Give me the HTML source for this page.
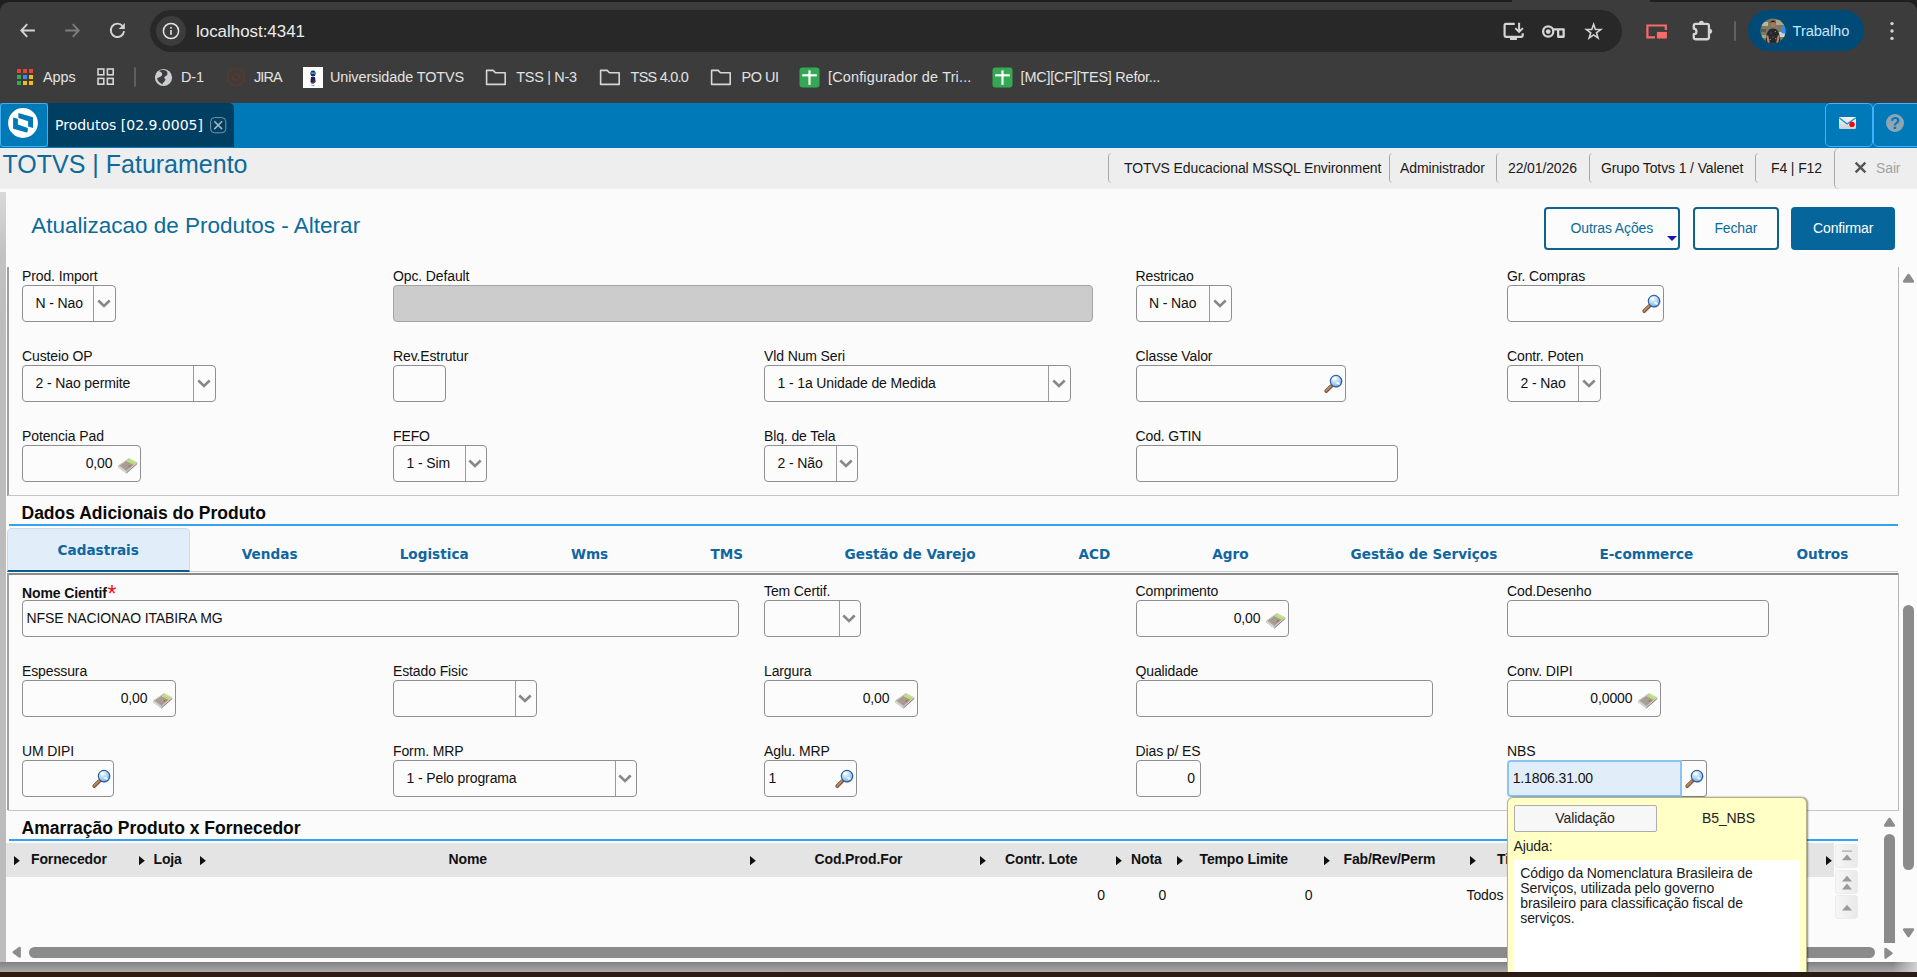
<!DOCTYPE html><html lang="pt-BR"><head><meta charset="utf-8"><title>Produtos</title><style>
*{box-sizing:border-box;margin:0;padding:0}
html,body{width:1917px;height:977px;overflow:hidden;background:#fbfbfb}
body{position:relative;font-family:"Liberation Sans",Arial,sans-serif;font-size:14px;color:#111}
.a{position:absolute}
.t{position:absolute;white-space:nowrap;line-height:1}
/* chrome */
#chrome{left:0;top:0;width:1917px;height:103px;background:#3c3c3c}
#strip{left:0;top:0;width:1917px;height:2px;background:#1f1f1f}
#omni{left:150px;top:10px;width:1472px;height:42px;border-radius:21px;background:#282828}
.bm{color:#e3e3e3;font-size:14.45px;top:70px;letter-spacing:-0.1px}
/* app */
#bar{left:0;top:103px;width:1917px;height:44.5px;background:#0079b8}
#band{left:0;top:147.5px;width:1917px;height:41px;background:#eeeeee}
.hd{font-size:14px;letter-spacing:-0.12px;color:#1a1a1a;top:161.3px}
.sep{width:5px;height:30px;top:153px;border-left:1px solid #a9a9a9;border-radius:4px 0 0 4px}
/* fields */
.lb{position:absolute;white-space:nowrap;font-size:14px;letter-spacing:-0.12px;line-height:16px;color:#111}
.bx{position:absolute;height:37px;border:1px solid #8f8f8f;border-radius:4px;background:#fcfcfc;font-size:14px;letter-spacing:-0.12px;line-height:34.8px;white-space:nowrap;overflow:hidden;color:#111}
.bx.dis{background:#cccccc;border-color:#a4a4a4}
.bx .dv{position:absolute;right:20.4px;top:0;width:1px;height:35px;background:#9a9a9a}
.bx svg.ch{position:absolute;right:3.9px;top:13.4px}
.bx svg.mg{position:absolute;right:1.6px;top:7.6px}
.bx svg.cl{position:absolute;right:2.4px;top:11.6px}
.sel{padding-left:12.5px}
.txt{padding-left:3.6px}
.num{text-align:right}
.tab{position:absolute;top:547.6px;font-family:"DejaVu Sans",Verdana,sans-serif;font-weight:bold;font-size:13.62px;line-height:1;color:#0f66a0;white-space:nowrap}
.sec{position:absolute;font-weight:bold;font-size:17.5px;line-height:1;color:#0a0a0a;white-space:nowrap}
.gh{position:absolute;top:851.8px;font-weight:bold;font-size:14px;letter-spacing:-0.13px;line-height:1;color:#111;white-space:nowrap}
.tri{position:absolute;top:856.4px;width:0;height:0;border-left:5.9px solid #111;border-top:4.65px solid transparent;border-bottom:4.65px solid transparent}
.gc{position:absolute;top:887.8px;font-size:14px;letter-spacing:-0.12px;line-height:1;white-space:nowrap}
.gb{position:absolute;left:1834.5px;width:23px;height:24px;border-radius:3px;background:linear-gradient(90deg,#f6f6f6,#e9e9e9);border:1px solid #ececec}
</style></head><body>
<div id="chrome" class="a"></div>
<div id="strip" class="a"></div>
<div class="a" style="left:1512px;top:0;width:138px;height:3px;background:#3c3c3c;border-radius:0"></div>
<div class="a" style="left:0;top:2px;width:10px;height:10px;background:#1f1f1f"></div><div class="a" style="left:0;top:2px;width:20px;height:20px;background:#3c3c3c;border-top-left-radius:9px"></div>
<div class="a" style="left:1907px;top:2px;width:10px;height:10px;background:#1f1f1f"></div><div class="a" style="left:1897px;top:2px;width:20px;height:20px;background:#3c3c3c;border-top-right-radius:9px"></div>
<div id="omni" class="a"></div>
<svg class="a" style="left:18px;top:21px" width="20" height="20" viewBox="0 0 20 20"><path d="M16.85 9.5H4M9.2 3.1 3.3 9.5 9.2 15.9" fill="none" stroke="#d4d4d4" stroke-width="1.9" stroke-linecap="butt" stroke-linejoin="miter"/></svg>
<svg class="a" style="left:62px;top:21px" width="20" height="20" viewBox="0 0 20 20"><path d="M3.15 9.5H16M10.8 3.1 16.7 9.5 10.8 15.9" fill="none" stroke="#7c7c7c" stroke-width="1.9"/></svg>
<svg class="a" style="left:107px;top:20px" width="22" height="22" viewBox="0 0 22 22"><path d="M15.6 6A6.7 6.7 0 1 0 17.13 11.2" fill="none" stroke="#d4d4d4" stroke-width="1.9"/><path d="M17.8 3V9.1H11.7Z" fill="#d4d4d4"/></svg>
<div class="a" style="left:156px;top:16px;width:30px;height:30px;border-radius:15px;background:#3c3c3c"></div>
<svg class="a" style="left:161px;top:21px" width="20" height="20" viewBox="0 0 20 20"><circle cx="10" cy="10" r="7.6" fill="none" stroke="#e3e3e3" stroke-width="1.5"/><rect x="9.2" y="9" width="1.6" height="4.8" fill="#e3e3e3"/><rect x="9.2" y="6" width="1.6" height="1.7" fill="#e3e3e3"/></svg>
<div class="t" style="left:196px;top:24px;font-size:16.9px;color:#ececec;letter-spacing:0px">localhost:4341</div>
<svg class="a" style="left:1502px;top:20px" width="24" height="22" viewBox="0 0 24 22"><path d="M12.7 3.9H3.8Q2.6 3.9 2.6 5.1V15.6Q2.6 16.8 3.8 16.8H19.5Q20.7 16.8 20.7 15.6V13.2" fill="none" stroke="#d4d4d4" stroke-width="2.2"/><rect x="8" y="17.8" width="6.9" height="2.2" fill="#d4d4d4"/><path d="M17.1 2.8V11M13.3 8.1 17.1 11.9 20.9 8.1" fill="none" stroke="#d4d4d4" stroke-width="2"/></svg>
<svg class="a" style="left:1541px;top:22px" width="26" height="18" viewBox="0 0 26 18"><circle cx="7.2" cy="9.5" r="5.1" fill="none" stroke="#d4d4d4" stroke-width="2.3"/><circle cx="7.2" cy="9.55" r="2.4" fill="#d4d4d4"/><path d="M12.1 7.35H22.65V14.75H17.15V8.2" fill="none" stroke="#d4d4d4" stroke-width="2.3" stroke-linejoin="round"/></svg>
<svg class="a" style="left:1583px;top:20px" width="22" height="22" viewBox="0 0 22 22"><path d="M10.60 4.35 12.38 9.46 17.78 9.57 13.47 12.83 15.04 18.01 10.60 14.92 6.16 18.01 7.73 12.83 3.42 9.57 8.82 9.46Z" fill="none" stroke="#d4d4d4" stroke-width="1.6" stroke-linejoin="miter" stroke-miterlimit="6"/></svg>
<svg class="a" style="left:1644px;top:22px" width="24" height="18" viewBox="0 0 24 18"><path d="M21.8 8V3.5H3.4V15.4H11" fill="none" stroke="#f96a6a" stroke-width="2.2"/><rect x="12.9" y="9.9" width="10" height="6.6" fill="#f96a6a"/></svg>
<svg class="a" style="left:1690px;top:19px" width="24" height="24" viewBox="0 0 24 24"><path d="M5.75 4.95H16.95Q18.95 4.95 18.95 6.95V18.25Q18.95 20.25 16.95 20.25H5.75Q3.75 20.25 3.75 18.25V15.1A2.7 2.7 0 0 0 3.75 9.7V6.95Q3.75 4.95 5.75 4.95Z" fill="none" stroke="#d4d4d4" stroke-width="2.3" stroke-linejoin="round"/><path d="M8.9 4.3A2.5 2.5 0 0 1 13.9 4.3Z" fill="#d4d4d4"/><path d="M19.6 9.8A2.5 2.5 0 0 1 19.6 14.8Z" fill="#d4d4d4"/></svg>
<div class="a" style="left:1734px;top:21px;width:2px;height:20px;background:#606060;border-radius:1px"></div>
<div class="a" style="left:1747.5px;top:9.7px;width:116.4px;height:41.8px;border-radius:21px;background:#004a77"></div>
<svg class="a" style="left:1759.5px;top:17.5px" width="26" height="26" viewBox="0 0 26 26"><defs><clipPath id="av"><circle cx="13" cy="13" r="12.5"/></clipPath></defs><g clip-path="url(#av)"><rect width="26" height="26" fill="#7d785f"/><rect x="0" y="4" width="8" height="4" fill="#b9b6a2"/><rect x="16" y="2" width="9" height="5" fill="#a9a792"/><rect x="1" y="11" width="5" height="3" fill="#5c5a48"/><rect x="18" y="14" width="7" height="5" fill="#d4d4cc"/><rect x="2" y="17" width="4" height="3" fill="#9ea58e"/><rect x="21.5" y="8" width="5" height="7.5" rx="1.5" fill="#2b8fe6"/><path d="M5.6 26C5.8 15 8 10.6 13 10.6S20.2 15 20.4 26Z" fill="#25282c"/><path d="M7.2 17.5 8.8 25M18.8 17.5 17.2 25" stroke="#b5866a" stroke-width="2.1"/><ellipse cx="13" cy="6" rx="2.5" ry="3.2" fill="#a9775c"/><path d="M10.4 5C10.6 1.6 15.4 1.6 15.6 5 14.4 3.8 11.6 3.8 10.4 5Z" fill="#1c1917"/><circle cx="11" cy="15" r=".6" fill="#c76a6a"/><circle cx="15.4" cy="13.6" r=".6" fill="#8fa86a"/><circle cx="13" cy="19" r=".6" fill="#c76a6a"/><circle cx="15.8" cy="20.6" r=".6" fill="#b9a25a"/><circle cx="10.2" cy="21.4" r=".6" fill="#8fa86a"/></g></svg>
<div class="t" style="left:1792.6px;top:23.6px;font-size:14.7px;color:#c2e7ff;letter-spacing:-0.1px">Trabalho</div>
<svg class="a" style="left:1888px;top:20px" width="8" height="22" viewBox="0 0 8 22"><circle cx="4" cy="3.6" r="1.7" fill="#d6d6d6"/><circle cx="4" cy="11" r="1.7" fill="#d6d6d6"/><circle cx="4" cy="18.4" r="1.7" fill="#d6d6d6"/></svg>
<svg class="a" style="left:17px;top:68.5px" width="16" height="16" viewBox="0 0 16 16"><rect x="0" y="0" width="4" height="4" fill="#ea4335"/><rect x="6" y="0" width="4" height="4" fill="#ea4335"/><rect x="12" y="0" width="4" height="4" fill="#ea4335"/><rect x="0" y="6" width="4" height="4" fill="#34a853"/><rect x="6" y="6" width="4" height="4" fill="#4285f4"/><rect x="12" y="6" width="4" height="4" fill="#fbbc04"/><rect x="0" y="12" width="4" height="4" fill="#34a853"/><rect x="6" y="12" width="4" height="4" fill="#fbbc04"/><rect x="12" y="12" width="4" height="4" fill="#fbbc04"/></svg>
<div class="t bm" style="left:43px">Apps</div>
<svg class="a" style="left:96px;top:67px" width="20" height="20" viewBox="0 0 20 20"><g fill="none" stroke="#d6d6d6" stroke-width="1.6"><rect x="2" y="2" width="5.8" height="5.8"/><rect x="11.4" y="2" width="5.8" height="5.8"/><rect x="2" y="11.4" width="5.8" height="5.8"/><rect x="11.4" y="11.4" width="5.8" height="5.8"/></g></svg>
<div class="a" style="left:134px;top:67px;width:2px;height:20px;background:#5f5f5f;border-radius:1px"></div>
<svg class="a" style="left:154px;top:67.5px" width="19" height="19" viewBox="0 0 19 19"><circle cx="9.5" cy="9.5" r="8.6" fill="#c9cdd2"/><path d="M5 3.2C8 4 9 6 7.6 7.8 6 9.4 4.4 9 3 10.6 4 14 7 15.6 8.4 16.6 8.8 14 11 13.4 11.6 11.4 10 10.2 9.6 9 11.4 8.2 13.6 7.6 14 5.6 13 3.6 10 1.6 7 1.8 5 3.2Z" fill="#3c3c3c"/></svg>
<div class="t bm" style="left:181px">D-1</div>
<svg class="a" style="left:226px;top:67px" width="20" height="20" viewBox="0 0 20 20"><circle cx="10" cy="10" r="8.4" fill="none" stroke="#553a2c" stroke-width="2"/><path d="M8.2 5.6 14.4 7.4 14.4 12 12.2 11.4 12.2 9 8.2 7.8ZM5.6 8 7.8 8.6 7.8 11 11.8 12.2 11.8 14.4 5.6 12.6Z" fill="#553a2c"/></svg>
<div class="t bm" style="left:254px;letter-spacing:-0.85px">JIRA</div>
<svg class="a" style="left:303px;top:66.5px" width="20" height="21" viewBox="0 0 20 21"><rect width="20" height="21" fill="#fff"/><ellipse cx="10" cy="6.4" rx="2.6" ry="3" fill="#1d2a6b"/><rect x="8.2" y="5.4" width="3.6" height="1.5" fill="#35b4e8"/><path d="M8 10H12L12.6 15 10 17 7.4 15Z" fill="#26215a"/><path d="M8 16.2 12.4 14.4" stroke="#7a4a2a" stroke-width="1"/><rect x="8.4" y="18.2" width="3.2" height="0.9" fill="#3aa0e0"/></svg>
<div class="t bm" style="left:330px">Universidade TOTVS</div>
<svg class="a" style="left:485px;top:67px" width="22" height="20" viewBox="0 0 22 20"><path d="M1.6 3.4H8.2L10.4 5.8H20.2V17.4H1.6Z" fill="none" stroke="#d6d6d6" stroke-width="1.6" stroke-linejoin="round"/></svg>
<div class="t bm" style="left:516.3px;letter-spacing:-0.3px">TSS | N-3</div>
<svg class="a" style="left:599px;top:67px" width="22" height="20" viewBox="0 0 22 20"><path d="M1.6 3.4H8.2L10.4 5.8H20.2V17.4H1.6Z" fill="none" stroke="#d6d6d6" stroke-width="1.6" stroke-linejoin="round"/></svg>
<div class="t bm" style="left:630.6px;letter-spacing:-0.75px">TSS 4.0.0</div>
<svg class="a" style="left:710px;top:67px" width="22" height="20" viewBox="0 0 22 20"><path d="M1.6 3.4H8.2L10.4 5.8H20.2V17.4H1.6Z" fill="none" stroke="#d6d6d6" stroke-width="1.6" stroke-linejoin="round"/></svg>
<div class="t bm" style="left:741.5px;letter-spacing:-0.45px">PO UI</div>
<svg class="a" style="left:799px;top:66.5px" width="21" height="21" viewBox="0 0 21 21"><rect x="0.5" y="0.5" width="20" height="20" rx="3" fill="#34a853"/><rect x="9.4" y="3.4" width="2.2" height="14.4" fill="#fff"/><rect x="3.2" y="7.2" width="14.6" height="2.2" fill="#fff"/></svg>
<div class="t bm" style="left:828px;letter-spacing:0.17px">[Configurador de Tri...</div>
<svg class="a" style="left:992px;top:66.5px" width="21" height="21" viewBox="0 0 21 21"><rect x="0.5" y="0.5" width="20" height="20" rx="3" fill="#34a853"/><rect x="9.4" y="3.4" width="2.2" height="14.4" fill="#fff"/><rect x="3.2" y="7.2" width="14.6" height="2.2" fill="#fff"/></svg>
<div class="t bm" style="left:1020.6px;letter-spacing:-0.22px">[MC][CF][TES] Refor...</div>
<div id="bar" class="a"></div>
<div class="a" style="left:0;top:103px;width:48px;height:44px;border:1px solid #45aeea;border-radius:3px;background:#0079b8"></div>
<svg class="a" style="left:0;top:100px" width="48" height="48" viewBox="0 0 48 48"><circle cx="23" cy="23" r="14.9" fill="#fff"/><path d="M18.4 13.1 33 17.2 33 27.9 28.1 26.5 28.1 21.3 18.4 17.9Z" fill="#0079b8"/><path d="M13.1 17.5 17.9 18.8 17.9 24.6 27.8 27.9 27.8 31.2 26.6 32.4 13.1 28.7Z" fill="#0079b8"/></svg>
<div class="a" style="left:48px;top:103px;width:186px;height:44px;background:#003e62;border-radius:0 5px 0 0"></div>
<div class="t" style="left:55px;top:117.5px;font-family:'DejaVu Sans',Verdana,sans-serif;font-size:14px;color:#fff">Produtos [02.9.0005]</div>
<svg class="a" style="left:210px;top:116.6px" width="17" height="17" viewBox="0 0 17 17"><rect x="0.6" y="0.6" width="15.2" height="15.2" rx="4" fill="none" stroke="#7f95a6" stroke-width="1"/><path d="M4.3 4.3 12.1 12.1M12.1 4.3 4.3 12.1" stroke="#a9b6c0" stroke-width="1.5"/></svg>
<div class="a" style="left:1825px;top:103px;width:48px;height:44px;border:1px solid #45aeff;border-radius:5px"></div>
<div class="a" style="left:1873px;top:103px;width:52px;height:44px;border:1px solid #45aeff;border-radius:5px"></div>
<svg class="a" style="left:1838px;top:116px" width="19" height="14" viewBox="0 0 19 14"><defs><linearGradient id="mg1" x1="0" y1="0" x2="0" y2="1"><stop offset="0" stop-color="#f2f5f7"/><stop offset="1" stop-color="#c6d3da"/></linearGradient></defs><rect x="1" y="1" width="17" height="12" rx="1.2" fill="url(#mg1)"/><path d="M1.4 2 9.2 8 17.6 2" fill="none" stroke="#1f84c4" stroke-width="1.2"/><circle cx="14" cy="8.4" r="2.7" fill="#ff0000"/></svg>
<div class="a" style="left:1886px;top:114px;width:18px;height:18px;border-radius:9px;background:#8fa5b5"></div>
<div class="t" style="left:1889.9px;top:114.7px;font-weight:bold;font-size:16.5px;color:#0079b8">?</div>
<div id="band" class="a"></div>
<div class="t" style="left:2.5px;top:152.2px;font-size:25px;color:#0c6b9b">TOTVS | Faturamento</div>
<div class="a sep" style="left:1108px"></div>
<div class="a sep" style="left:1389px"></div>
<div class="a sep" style="left:1496px"></div>
<div class="a sep" style="left:1589px"></div>
<div class="a sep" style="left:1755px"></div>
<div class="a" style="left:1834px;top:148px;width:6px;height:41px;border-left:1px solid #a9a9a9;border-radius:5px 0 0 5px"></div>
<div class="t hd" style="left:1124px">TOTVS Educacional MSSQL Environment</div>
<div class="t hd" style="left:1400px">Administrador</div>
<div class="t hd" style="left:1508px">22/01/2026</div>
<div class="t hd" style="left:1601px">Grupo Totvs 1 / Valenet</div>
<div class="t hd" style="left:1771px">F4 | F12</div>
<svg class="a" style="left:1853.5px;top:161px" width="13" height="13" viewBox="0 0 13 13"><path d="M1.6 1.6 11.4 11.4M11.4 1.6 1.6 11.4" stroke="#575757" stroke-width="2.4"/></svg>
<div class="t hd" style="left:1876px;color:#a2a2a2">Sair</div>
<div class="a" style="left:0;top:192px;width:5.8px;height:770px;background:linear-gradient(180deg,#dadada 0,#c2c2c2 8%,#bcbcbc 20%,#bcbcbc 100%)"></div>
<div class="t" style="left:31.2px;top:214.9px;font-size:22.5px;color:#0c6b9b">Atualizacao de Produtos - Alterar</div>
<div class="a" style="left:1544px;top:207px;width:136px;height:43px;border:2px solid #0c6390;border-radius:4px;background:#fcfcfc"></div>
<div class="t" style="left:1570.6px;top:221px;font-size:14px;letter-spacing:-0.13px;color:#0c6b9b">Outras Ações</div>
<div class="a" style="left:1667px;top:236px;width:0;height:0;border-top:5px solid #1a1aa8;border-left:5px solid transparent;border-right:5px solid transparent"></div>
<div class="a" style="left:1692.5px;top:207px;width:86.5px;height:43px;border:2px solid #0c6390;border-radius:4px;background:#fcfcfc"></div>
<div class="t" style="left:1714.4px;top:221px;font-size:14px;letter-spacing:-0.13px;color:#0c6b9b">Fechar</div>
<div class="a" style="left:1790.5px;top:207px;width:104.5px;height:43px;border-radius:4px;background:#06659a"></div>
<div class="t" style="left:1813px;top:221px;font-size:14px;letter-spacing:-0.13px;color:#fff">Confirmar</div>
<div class="a" style="left:7px;top:267px;width:2px;height:229px;background:#a0a0a0"></div>
<div class="a" style="left:1898px;top:267px;width:1px;height:229px;background:#b5b5b5"></div>
<div class="a" style="left:8px;top:495px;width:1890.5px;height:1px;background:#c6c6c6"></div>
<svg width="0" height="0" style="position:absolute"><defs><radialGradient id="lens" cx=".4" cy=".3" r=".8"><stop offset="0" stop-color="#f0f9ff"/><stop offset=".5" stop-color="#add6f5"/><stop offset="1" stop-color="#6ca4da"/></radialGradient></defs></svg>
<div class="lb" style="left:22px;top:268.4px">Prod. Import</div>
<div class="bx sel" style="left:22px;top:285px;width:94px">N - Nao<i class="dv" style="right:20.9px"></i><svg class="ch" width="14" height="9" viewBox="0 0 14 9"><path d="M1.3 1.5 7 7 12.7 1.5" fill="none" stroke="#888888" stroke-width="2.6" stroke-linejoin="miter"/></svg></div>
<div class="lb" style="left:393px;top:268.4px">Opc. Default</div>
<div class="bx dis" style="left:393px;top:285px;width:699.5px"></div>
<div class="lb" style="left:1135.5px;top:268.4px">Restricao</div>
<div class="bx sel" style="left:1135.5px;top:285px;width:96px">N - Nao<i class="dv" style="right:20.2px"></i><svg class="ch" width="14" height="9" viewBox="0 0 14 9"><path d="M1.3 1.5 7 7 12.7 1.5" fill="none" stroke="#888888" stroke-width="2.6" stroke-linejoin="miter"/></svg></div>
<div class="lb" style="left:1507px;top:268.4px">Gr. Compras</div>
<div class="bx txt" style="left:1507px;top:285px;width:157px"><svg class="mg" width="20" height="20" viewBox="0 0 20 20"><path d="M8.8 12 3.4 17.4" stroke="#000" stroke-opacity=".18" stroke-width="3.8" stroke-linecap="round"/><path d="M8.6 11.8 3.2 17.1" stroke="#6a422c" stroke-width="3.5" stroke-linecap="round"/><path d="M8.6 11.8 3.2 17.1" stroke="#ad7654" stroke-width="2.1" stroke-linecap="round"/><path d="M7.9 11.7 3 16.5" stroke="#d6aa88" stroke-width=".8" stroke-linecap="round"/><circle cx="13.4" cy="7.6" r="6.2" fill="#1d3f6e" opacity=".3"/><circle cx="13" cy="7.1" r="5.7" fill="url(#lens)" stroke="#33619a" stroke-width="1.2"/><ellipse cx="11.2" cy="4.7" rx="2.1" ry="1.4" fill="#fff" opacity=".95"/><ellipse cx="15" cy="9.3" rx="1.9" ry="1.2" fill="#fff" opacity=".85" transform="rotate(35 15 9.3)"/></svg></div>
<div class="lb" style="left:22px;top:348.4px">Custeio OP</div>
<div class="bx sel" style="left:22px;top:365px;width:194px">2 - Nao permite<i class="dv" style="right:20.9px"></i><svg class="ch" width="14" height="9" viewBox="0 0 14 9"><path d="M1.3 1.5 7 7 12.7 1.5" fill="none" stroke="#888888" stroke-width="2.6" stroke-linejoin="miter"/></svg></div>
<div class="lb" style="left:393px;top:348.4px">Rev.Estrutur</div>
<div class="bx txt" style="left:393px;top:365px;width:52.5px"></div>
<div class="lb" style="left:764px;top:348.4px">Vld Num Seri</div>
<div class="bx sel" style="left:764px;top:365px;width:307px">1 - 1a Unidade de Medida<i class="dv" style="right:21.2px"></i><svg class="ch" width="14" height="9" viewBox="0 0 14 9"><path d="M1.3 1.5 7 7 12.7 1.5" fill="none" stroke="#888888" stroke-width="2.6" stroke-linejoin="miter"/></svg></div>
<div class="lb" style="left:1135.5px;top:348.4px">Classe Valor</div>
<div class="bx txt" style="left:1135.5px;top:365px;width:210.5px"><svg class="mg" width="20" height="20" viewBox="0 0 20 20"><path d="M8.8 12 3.4 17.4" stroke="#000" stroke-opacity=".18" stroke-width="3.8" stroke-linecap="round"/><path d="M8.6 11.8 3.2 17.1" stroke="#6a422c" stroke-width="3.5" stroke-linecap="round"/><path d="M8.6 11.8 3.2 17.1" stroke="#ad7654" stroke-width="2.1" stroke-linecap="round"/><path d="M7.9 11.7 3 16.5" stroke="#d6aa88" stroke-width=".8" stroke-linecap="round"/><circle cx="13.4" cy="7.6" r="6.2" fill="#1d3f6e" opacity=".3"/><circle cx="13" cy="7.1" r="5.7" fill="url(#lens)" stroke="#33619a" stroke-width="1.2"/><ellipse cx="11.2" cy="4.7" rx="2.1" ry="1.4" fill="#fff" opacity=".95"/><ellipse cx="15" cy="9.3" rx="1.9" ry="1.2" fill="#fff" opacity=".85" transform="rotate(35 15 9.3)"/></svg></div>
<div class="lb" style="left:1507px;top:348.4px">Contr. Poten</div>
<div class="bx sel" style="left:1507px;top:365px;width:93.5px">2 - Nao<i class="dv" style="right:20.5px"></i><svg class="ch" width="14" height="9" viewBox="0 0 14 9"><path d="M1.3 1.5 7 7 12.7 1.5" fill="none" stroke="#888888" stroke-width="2.6" stroke-linejoin="miter"/></svg></div>
<div class="lb" style="left:22px;top:428.4px">Potencia Pad</div>
<div class="bx num" style="left:22px;top:445px;width:119px;padding-right:27.6px">0,00<svg class="cl" width="20" height="16" viewBox="0 0 20 16"><path d="M0.2 7.7 8.5 13.8 19.2 4.5 19.2 6.1 8.5 15.5 0.2 9.3Z" fill="#857e73"/><path d="M0.2 7.7 8.5 13.8 8.5 15.5 0.2 9.3Z" fill="#dcdcda"/><path d="M10.9 0.3 19.2 4.5 8.5 13.8 0.2 7.7Z" fill="#b1a99d" stroke="#dedbd5" stroke-width=".8" stroke-linejoin="round"/><path d="M3 7.7 8.9 3.7 14.7 6.6 8.5 11.8Z" fill="#a0988c"/><path d="M4.6 8.9 10.6 4.6M6.4 10.2 12.5 5.6" stroke="#bdb6ab" stroke-width=".6"/><path d="M11.3 1.3 17.8 4.1 16 6.3 9.1 3.1Z" fill="#a2dc4c" stroke="#dff2bd" stroke-width=".55"/><path d="M11.5 1.9 16.9 4.2 16.2 5 10.6 2.7Z" fill="#c2ec7e"/><circle cx="11.5" cy="7.8" r=".85" fill="#e2472d"/></svg></div>
<div class="lb" style="left:393px;top:428.4px">FEFO</div>
<div class="bx sel" style="left:393px;top:445px;width:93.5px">1 - Sim<i class="dv" style="right:19.8px"></i><svg class="ch" width="14" height="9" viewBox="0 0 14 9"><path d="M1.3 1.5 7 7 12.7 1.5" fill="none" stroke="#888888" stroke-width="2.6" stroke-linejoin="miter"/></svg></div>
<div class="lb" style="left:764px;top:428.4px">Blq. de Tela</div>
<div class="bx sel" style="left:764px;top:445px;width:94px">2 - Não<i class="dv" style="right:19.8px"></i><svg class="ch" width="14" height="9" viewBox="0 0 14 9"><path d="M1.3 1.5 7 7 12.7 1.5" fill="none" stroke="#888888" stroke-width="2.6" stroke-linejoin="miter"/></svg></div>
<div class="lb" style="left:1135.5px;top:428.4px">Cod. GTIN</div>
<div class="bx txt" style="left:1135.5px;top:445px;width:262.5px"></div>
<div class="sec" style="left:21.5px;top:505px">Dados Adicionais do Produto</div>
<div class="a" style="left:9px;top:524px;width:1889px;height:2px;background:#35a1f0"></div>
<div class="a" style="left:189px;top:571px;width:1709px;height:1px;background:#cfcfcf"></div>
<div class="a" style="left:7px;top:573px;width:1891px;height:2px;background:#8a8a8a"></div>
<div class="a" style="left:7px;top:573px;width:2px;height:237px;background:#a0a0a0"></div>
<div class="a" style="left:1898px;top:573px;width:1px;height:237px;background:#b5b5b5"></div>
<div class="a" style="left:7px;top:528px;width:183px;height:44px;background:#e1edf9;border:1px solid #ccd9e6;border-bottom:2.5px solid #0b5b8c;border-radius:5px 5px 0 0"></div>
<div class="tab" style="left:57.5px;top:543.5px">Cadastrais</div>
<div class="tab" style="left:241.8px">Vendas</div>
<div class="tab" style="left:399.7px">Logistica</div>
<div class="tab" style="left:570.9px">Wms</div>
<div class="tab" style="left:710.5px">TMS</div>
<div class="tab" style="left:844.6px">Gestão de Varejo</div>
<div class="tab" style="left:1078.4px">ACD</div>
<div class="tab" style="left:1212.3px">Agro</div>
<div class="tab" style="left:1350.5px">Gestão de Serviços</div>
<div class="tab" style="left:1599.4px">E-commerce</div>
<div class="tab" style="left:1796.4px">Outros</div>
<div class="lb" style="left:22px;top:584.9px;font-weight:bold">Nome Cientif<span style="color:#ee1111;font-weight:normal;font-size:23px;line-height:10px;position:relative;top:4px;left:0.5px">*</span></div>
<div class="bx txt" style="left:22px;top:600px;width:716.5px">NFSE NACIONAO ITABIRA MG</div>
<div class="lb" style="left:764px;top:583.4px">Tem Certif.</div>
<div class="bx sel" style="left:764px;top:600px;width:97px"><i class="dv" style="right:20.5px"></i><svg class="ch" width="14" height="9" viewBox="0 0 14 9"><path d="M1.3 1.5 7 7 12.7 1.5" fill="none" stroke="#888888" stroke-width="2.6" stroke-linejoin="miter"/></svg></div>
<div class="lb" style="left:1135.5px;top:583.4px">Comprimento</div>
<div class="bx num" style="left:1135.5px;top:600px;width:153.5px;padding-right:27.6px">0,00<svg class="cl" width="20" height="16" viewBox="0 0 20 16"><path d="M0.2 7.7 8.5 13.8 19.2 4.5 19.2 6.1 8.5 15.5 0.2 9.3Z" fill="#857e73"/><path d="M0.2 7.7 8.5 13.8 8.5 15.5 0.2 9.3Z" fill="#dcdcda"/><path d="M10.9 0.3 19.2 4.5 8.5 13.8 0.2 7.7Z" fill="#b1a99d" stroke="#dedbd5" stroke-width=".8" stroke-linejoin="round"/><path d="M3 7.7 8.9 3.7 14.7 6.6 8.5 11.8Z" fill="#a0988c"/><path d="M4.6 8.9 10.6 4.6M6.4 10.2 12.5 5.6" stroke="#bdb6ab" stroke-width=".6"/><path d="M11.3 1.3 17.8 4.1 16 6.3 9.1 3.1Z" fill="#a2dc4c" stroke="#dff2bd" stroke-width=".55"/><path d="M11.5 1.9 16.9 4.2 16.2 5 10.6 2.7Z" fill="#c2ec7e"/><circle cx="11.5" cy="7.8" r=".85" fill="#e2472d"/></svg></div>
<div class="lb" style="left:1507px;top:583.4px">Cod.Desenho</div>
<div class="bx txt" style="left:1507px;top:600px;width:261.5px"></div>
<div class="lb" style="left:22px;top:663.4px">Espessura</div>
<div class="bx num" style="left:22px;top:680px;width:154px;padding-right:27.6px">0,00<svg class="cl" width="20" height="16" viewBox="0 0 20 16"><path d="M0.2 7.7 8.5 13.8 19.2 4.5 19.2 6.1 8.5 15.5 0.2 9.3Z" fill="#857e73"/><path d="M0.2 7.7 8.5 13.8 8.5 15.5 0.2 9.3Z" fill="#dcdcda"/><path d="M10.9 0.3 19.2 4.5 8.5 13.8 0.2 7.7Z" fill="#b1a99d" stroke="#dedbd5" stroke-width=".8" stroke-linejoin="round"/><path d="M3 7.7 8.9 3.7 14.7 6.6 8.5 11.8Z" fill="#a0988c"/><path d="M4.6 8.9 10.6 4.6M6.4 10.2 12.5 5.6" stroke="#bdb6ab" stroke-width=".6"/><path d="M11.3 1.3 17.8 4.1 16 6.3 9.1 3.1Z" fill="#a2dc4c" stroke="#dff2bd" stroke-width=".55"/><path d="M11.5 1.9 16.9 4.2 16.2 5 10.6 2.7Z" fill="#c2ec7e"/><circle cx="11.5" cy="7.8" r=".85" fill="#e2472d"/></svg></div>
<div class="lb" style="left:393px;top:663.4px">Estado Fisic</div>
<div class="bx sel" style="left:393px;top:680px;width:144px"><i class="dv" style="right:19.8px"></i><svg class="ch" width="14" height="9" viewBox="0 0 14 9"><path d="M1.3 1.5 7 7 12.7 1.5" fill="none" stroke="#888888" stroke-width="2.6" stroke-linejoin="miter"/></svg></div>
<div class="lb" style="left:764px;top:663.4px">Largura</div>
<div class="bx num" style="left:764px;top:680px;width:154px;padding-right:27.6px">0,00<svg class="cl" width="20" height="16" viewBox="0 0 20 16"><path d="M0.2 7.7 8.5 13.8 19.2 4.5 19.2 6.1 8.5 15.5 0.2 9.3Z" fill="#857e73"/><path d="M0.2 7.7 8.5 13.8 8.5 15.5 0.2 9.3Z" fill="#dcdcda"/><path d="M10.9 0.3 19.2 4.5 8.5 13.8 0.2 7.7Z" fill="#b1a99d" stroke="#dedbd5" stroke-width=".8" stroke-linejoin="round"/><path d="M3 7.7 8.9 3.7 14.7 6.6 8.5 11.8Z" fill="#a0988c"/><path d="M4.6 8.9 10.6 4.6M6.4 10.2 12.5 5.6" stroke="#bdb6ab" stroke-width=".6"/><path d="M11.3 1.3 17.8 4.1 16 6.3 9.1 3.1Z" fill="#a2dc4c" stroke="#dff2bd" stroke-width=".55"/><path d="M11.5 1.9 16.9 4.2 16.2 5 10.6 2.7Z" fill="#c2ec7e"/><circle cx="11.5" cy="7.8" r=".85" fill="#e2472d"/></svg></div>
<div class="lb" style="left:1135.5px;top:663.4px">Qualidade</div>
<div class="bx txt" style="left:1135.5px;top:680px;width:297px"></div>
<div class="lb" style="left:1507px;top:663.4px">Conv. DIPI</div>
<div class="bx num" style="left:1507px;top:680px;width:154px;padding-right:27.6px">0,0000<svg class="cl" width="20" height="16" viewBox="0 0 20 16"><path d="M0.2 7.7 8.5 13.8 19.2 4.5 19.2 6.1 8.5 15.5 0.2 9.3Z" fill="#857e73"/><path d="M0.2 7.7 8.5 13.8 8.5 15.5 0.2 9.3Z" fill="#dcdcda"/><path d="M10.9 0.3 19.2 4.5 8.5 13.8 0.2 7.7Z" fill="#b1a99d" stroke="#dedbd5" stroke-width=".8" stroke-linejoin="round"/><path d="M3 7.7 8.9 3.7 14.7 6.6 8.5 11.8Z" fill="#a0988c"/><path d="M4.6 8.9 10.6 4.6M6.4 10.2 12.5 5.6" stroke="#bdb6ab" stroke-width=".6"/><path d="M11.3 1.3 17.8 4.1 16 6.3 9.1 3.1Z" fill="#a2dc4c" stroke="#dff2bd" stroke-width=".55"/><path d="M11.5 1.9 16.9 4.2 16.2 5 10.6 2.7Z" fill="#c2ec7e"/><circle cx="11.5" cy="7.8" r=".85" fill="#e2472d"/></svg></div>
<div class="lb" style="left:22px;top:743.4px">UM DIPI</div>
<div class="bx txt" style="left:22px;top:760px;width:92px"><svg class="mg" width="20" height="20" viewBox="0 0 20 20"><path d="M8.8 12 3.4 17.4" stroke="#000" stroke-opacity=".18" stroke-width="3.8" stroke-linecap="round"/><path d="M8.6 11.8 3.2 17.1" stroke="#6a422c" stroke-width="3.5" stroke-linecap="round"/><path d="M8.6 11.8 3.2 17.1" stroke="#ad7654" stroke-width="2.1" stroke-linecap="round"/><path d="M7.9 11.7 3 16.5" stroke="#d6aa88" stroke-width=".8" stroke-linecap="round"/><circle cx="13.4" cy="7.6" r="6.2" fill="#1d3f6e" opacity=".3"/><circle cx="13" cy="7.1" r="5.7" fill="url(#lens)" stroke="#33619a" stroke-width="1.2"/><ellipse cx="11.2" cy="4.7" rx="2.1" ry="1.4" fill="#fff" opacity=".95"/><ellipse cx="15" cy="9.3" rx="1.9" ry="1.2" fill="#fff" opacity=".85" transform="rotate(35 15 9.3)"/></svg></div>
<div class="lb" style="left:393px;top:743.4px">Form. MRP</div>
<div class="bx sel" style="left:393px;top:760px;width:243.5px">1 - Pelo programa<i class="dv" style="right:19.8px"></i><svg class="ch" width="14" height="9" viewBox="0 0 14 9"><path d="M1.3 1.5 7 7 12.7 1.5" fill="none" stroke="#888888" stroke-width="2.6" stroke-linejoin="miter"/></svg></div>
<div class="lb" style="left:764px;top:743.4px">Aglu. MRP</div>
<div class="bx txt" style="left:764px;top:760px;width:93px">1<svg class="mg" width="20" height="20" viewBox="0 0 20 20"><path d="M8.8 12 3.4 17.4" stroke="#000" stroke-opacity=".18" stroke-width="3.8" stroke-linecap="round"/><path d="M8.6 11.8 3.2 17.1" stroke="#6a422c" stroke-width="3.5" stroke-linecap="round"/><path d="M8.6 11.8 3.2 17.1" stroke="#ad7654" stroke-width="2.1" stroke-linecap="round"/><path d="M7.9 11.7 3 16.5" stroke="#d6aa88" stroke-width=".8" stroke-linecap="round"/><circle cx="13.4" cy="7.6" r="6.2" fill="#1d3f6e" opacity=".3"/><circle cx="13" cy="7.1" r="5.7" fill="url(#lens)" stroke="#33619a" stroke-width="1.2"/><ellipse cx="11.2" cy="4.7" rx="2.1" ry="1.4" fill="#fff" opacity=".95"/><ellipse cx="15" cy="9.3" rx="1.9" ry="1.2" fill="#fff" opacity=".85" transform="rotate(35 15 9.3)"/></svg></div>
<div class="lb" style="left:1135.5px;top:743.4px">Dias p/ ES</div>
<div class="bx num" style="left:1135.5px;top:760px;width:65px;padding-right:4.6px">0</div>
<div class="lb" style="left:1507px;top:743.4px">NBS</div>
<div class="a" style="left:1681px;top:760px;width:25.5px;height:37px;border:1px solid #8f8f8f;border-left:none;border-radius:0 4px 4px 0;background:#fcfcfc"></div>
<div class="a" style="left:1683.6px;top:768.6px;width:20px;height:20px"><svg width="20" height="20" viewBox="0 0 20 20"><path d="M8.8 12 3.4 17.4" stroke="#000" stroke-opacity=".18" stroke-width="3.8" stroke-linecap="round"/><path d="M8.6 11.8 3.2 17.1" stroke="#6a422c" stroke-width="3.5" stroke-linecap="round"/><path d="M8.6 11.8 3.2 17.1" stroke="#ad7654" stroke-width="2.1" stroke-linecap="round"/><path d="M7.9 11.7 3 16.5" stroke="#d6aa88" stroke-width=".8" stroke-linecap="round"/><circle cx="13.4" cy="7.6" r="6.2" fill="#1d3f6e" opacity=".3"/><circle cx="13" cy="7.1" r="5.7" fill="url(#lens)" stroke="#33619a" stroke-width="1.2"/><ellipse cx="11.2" cy="4.7" rx="2.1" ry="1.4" fill="#fff" opacity=".95"/><ellipse cx="15" cy="9.3" rx="1.9" ry="1.2" fill="#fff" opacity=".85" transform="rotate(35 15 9.3)"/></svg></div>
<div class="bx txt" style="left:1507px;top:760px;width:175px;background:#e1edf9;border:2px solid #8cc4f2;border-radius:4px 0 0 4px;line-height:33px;padding-left:3.7px">1.1806.31.00</div>
<div class="a" style="left:8px;top:809.5px;width:1890.5px;height:1px;background:#c6c6c6"></div>
<div class="sec" style="left:21.5px;top:820px">Amarração Produto x Fornecedor</div>
<div class="a" style="left:9px;top:839.2px;width:1849px;height:1.8px;background:#35a1f0"></div>
<div class="a" style="left:6px;top:842.7px;width:1828px;height:34.1px;background:#e4e4e4"></div>
<svg class="a" style="left:13.5px;top:856.4px" width="6" height="9.4" viewBox="0 0 6 9.4"><path d="M0 0 5.9 4.65 0 9.3Z" fill="#111"/></svg>
<svg class="a" style="left:139px;top:856.4px" width="6" height="9.4" viewBox="0 0 6 9.4"><path d="M0 0 5.9 4.65 0 9.3Z" fill="#111"/></svg>
<svg class="a" style="left:199.5px;top:856.4px" width="6" height="9.4" viewBox="0 0 6 9.4"><path d="M0 0 5.9 4.65 0 9.3Z" fill="#111"/></svg>
<svg class="a" style="left:749.5px;top:856.4px" width="6" height="9.4" viewBox="0 0 6 9.4"><path d="M0 0 5.9 4.65 0 9.3Z" fill="#111"/></svg>
<svg class="a" style="left:980px;top:856.4px" width="6" height="9.4" viewBox="0 0 6 9.4"><path d="M0 0 5.9 4.65 0 9.3Z" fill="#111"/></svg>
<svg class="a" style="left:1115.5px;top:856.4px" width="6" height="9.4" viewBox="0 0 6 9.4"><path d="M0 0 5.9 4.65 0 9.3Z" fill="#111"/></svg>
<svg class="a" style="left:1177px;top:856.4px" width="6" height="9.4" viewBox="0 0 6 9.4"><path d="M0 0 5.9 4.65 0 9.3Z" fill="#111"/></svg>
<svg class="a" style="left:1323.5px;top:856.4px" width="6" height="9.4" viewBox="0 0 6 9.4"><path d="M0 0 5.9 4.65 0 9.3Z" fill="#111"/></svg>
<svg class="a" style="left:1469.5px;top:856.4px" width="6" height="9.4" viewBox="0 0 6 9.4"><path d="M0 0 5.9 4.65 0 9.3Z" fill="#111"/></svg>
<svg class="a" style="left:1825.5px;top:856.4px" width="6" height="9.4" viewBox="0 0 6 9.4"><path d="M0 0 5.9 4.65 0 9.3Z" fill="#111"/></svg>
<div class="gh" style="left:31px">Fornecedor</div>
<div class="gh" style="left:153.5px">Loja</div>
<div class="gh" style="left:448.5px">Nome</div>
<div class="gh" style="left:814.5px">Cod.Prod.For</div>
<div class="gh" style="left:1005px">Contr. Lote</div>
<div class="gh" style="left:1131px">Nota</div>
<div class="gh" style="left:1199.5px">Tempo Limite</div>
<div class="gh" style="left:1343.5px">Fab/Rev/Perm</div>
<div class="gh" style="left:1497px">Ti</div>
<div class="gc" style="left:1097.2px">0</div>
<div class="gc" style="left:1158.4px">0</div>
<div class="gc" style="left:1304.8px">0</div>
<div class="gc" style="left:1466.5px">Todos</div>
<div class="gb" style="top:843.5px"><svg width="21" height="22" viewBox="0 0 21 22" style="display:block"><rect x="6" y="5.6" width="10" height="1" fill="#9a9a9a"/><path d="M6 15.2l5-5.8 5 5.8z" fill="#9a9a9a"/></svg></div>
<div class="gb" style="top:869.5px"><svg width="21" height="22" viewBox="0 0 21 22" style="display:block"><path d="M6 10.6l5-5.8 5 5.8zM6 18.4l5-5.8 5 5.8z" fill="#9a9a9a"/></svg></div>
<div class="gb" style="top:894.5px"><svg width="21" height="22" viewBox="0 0 21 22" style="display:block"><path d="M6 14.6l5-5.8 5 5.8z" fill="#9a9a9a"/></svg></div>
<div class="a" style="left:1902.5px;top:605px;width:11px;height:265px;border-radius:5.5px;background:#8b8b8b"></div>
<svg class="a" style="left:1902.2px;top:272.9px" width="13" height="10" viewBox="0 0 12.7 10"><polygon points="2 8.4 10.7 8.4 6.35 2" fill="#8c8c8c" stroke="#8c8c8c" stroke-width="2.6" stroke-linejoin="round"/></svg>
<svg class="a" style="left:1902.1px;top:928.2px" width="13" height="10" viewBox="0 0 12.7 10"><polygon points="2 1.6 10.7 1.6 6.35 8" fill="#8c8c8c" stroke="#8c8c8c" stroke-width="2.6" stroke-linejoin="round"/></svg>
<svg class="a" style="left:1883.4px;top:817px" width="13" height="10" viewBox="0 0 12.7 10"><polygon points="2 8.4 10.7 8.4 6.35 2" fill="#8c8c8c" stroke="#8c8c8c" stroke-width="2.6" stroke-linejoin="round"/></svg>
<div class="a" style="left:1884px;top:833.5px;width:11px;height:109.3px;border-radius:5.5px 5.5px 0 0;background:#8b8b8b"></div>
<div class="a" style="left:29px;top:947px;width:1846px;height:10.5px;border-radius:5.5px;background:#8b8b8b"></div>
<svg class="a" style="left:11.8px;top:946.4px" width="9.4" height="12.4" viewBox="0 0 9.4 12.4"><polygon points="7.6 2 7.6 10.4 1.8 6.2" fill="#8c8c8c" stroke="#8c8c8c" stroke-width="2.6" stroke-linejoin="round"/></svg>
<svg class="a" style="left:1884px;top:946.6px" width="9.4" height="12.4" viewBox="0 0 9.4 12.4"><polygon points="1.6 2 1.6 10.4 7.4 6.2" fill="#8c8c8c" stroke="#8c8c8c" stroke-width="2.6" stroke-linejoin="round"/></svg>
<div class="a" style="left:0;top:962px;width:1917px;height:10px;background:linear-gradient(180deg,#808080,#aaaaaa)"></div>
<div class="a" style="left:1893px;top:962px;width:24px;height:10px;background:linear-gradient(90deg,rgba(214,214,214,0),rgba(214,214,214,.95))"></div>
<div class="a" style="left:0;top:971.7px;width:1917px;height:6px;background:linear-gradient(90deg,#311c11,#2a1c16)"></div>
<div class="a" style="left:1507px;top:797px;width:300px;height:174.6px;background:#ffffc6;border:1px solid #b4b48c;border-bottom:none;border-radius:6px 6px 0 0;box-shadow:1px 0 2px rgba(0,0,0,.45)"></div>
<div class="a" style="left:1513.5px;top:805px;width:143px;height:26.5px;background:#f7f7f7;border:1px solid #adadad;border-radius:2px;text-align:center;line-height:24.5px;font-size:14px;letter-spacing:-0.12px;color:#222">Validação</div>
<div class="t" style="left:1702px;top:811.3px;font-size:14px;letter-spacing:-0.12px;color:#222">B5_NBS</div>
<div class="t" style="left:1513.5px;top:838.5px;font-size:14px;letter-spacing:-0.12px;color:#222">Ajuda:</div>
<div class="a" style="left:1513.5px;top:859.5px;width:286px;height:112px;background:#fff;padding:6.3px 0 0 6.8px;font-size:14px;letter-spacing:-0.12px;line-height:15px;color:#1a1a1a">Código da Nomenclatura Brasileira de<br>Serviços, utilizada pelo governo<br>brasileiro para classificação fiscal de<br>serviços.</div>
</body></html>
